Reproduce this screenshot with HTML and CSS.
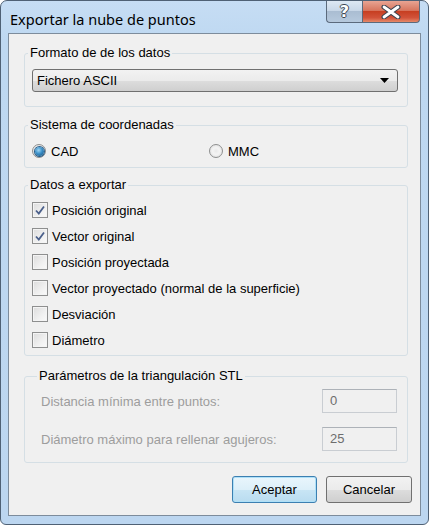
FILE: index.html
```html
<!DOCTYPE html>
<html lang="es">
<head>
<meta charset="utf-8">
<title>Exportar la nube de puntos</title>
<link rel="stylesheet" href="styles.css">
</head>
<body>
<div class="window">
  <div class="titlebar">
    <span class="title">Exportar la nube de puntos</span>
    <div class="caption-buttons">
      <div class="cap-btn help"><span class="help-glyph">?</span></div>
      <div class="cap-btn close">
        <svg width="22" height="14" viewBox="0 0 22 14">
          <path d="M4 2 L18 12 M18 2 L4 12" stroke="#3a4350" stroke-width="5" stroke-linecap="round"/>
          <path d="M4 2 L18 12 M18 2 L4 12" stroke="#ffffff" stroke-width="2.8" stroke-linecap="round"/>
        </svg>
      </div>
    </div>
  </div>
  <div class="client">
    <fieldset class="group g-format">
      <legend>Formato de de los datos</legend>
      <div class="combo">
        <span>Fichero ASCII</span>
        <svg class="combo-arrow" width="9" height="5" viewBox="0 0 9 5"><path d="M0 0 H9 L4.5 5 Z" fill="#000"/></svg>
      </div>
    </fieldset>

    <fieldset class="group g-coords">
      <legend>Sistema de coordenadas</legend>
      <div class="radio-row">
        <div class="option radio-opt"><span class="radio checked"></span>CAD</div>
        <div class="option radio-opt mmc"><span class="radio"></span>MMC</div>
      </div>
    </fieldset>

    <fieldset class="group g-data">
      <legend>Datos a exportar</legend>
      <div class="check-list">
        <div class="option"><span class="check checked"><svg width="12" height="12" viewBox="0 0 12 12"><path d="M2 6.5 L4.8 9.5 L10 2.5" fill="none" stroke="#4a5f8a" stroke-width="1.8"/></svg></span>Posición original</div>
        <div class="option"><span class="check checked"><svg width="12" height="12" viewBox="0 0 12 12"><path d="M2 6.5 L4.8 9.5 L10 2.5" fill="none" stroke="#4a5f8a" stroke-width="1.8"/></svg></span>Vector original</div>
        <div class="option"><span class="check"></span>Posición proyectada</div>
        <div class="option"><span class="check"></span>Vector proyectado (normal de la superficie)</div>
        <div class="option"><span class="check"></span>Desviación</div>
        <div class="option"><span class="check"></span>Diámetro</div>
      </div>
    </fieldset>

    <fieldset class="group g-stl">
      <legend>Parámetros de la triangulación STL</legend>
      <div class="field-row">
        <span class="disabled-label">Distancia mínima entre puntos:</span>
        <div class="field">0</div>
      </div>
      <div class="field-row">
        <span class="disabled-label">Diámetro máximo para rellenar agujeros:</span>
        <div class="field">25</div>
      </div>
    </fieldset>

    <div class="buttons">
      <div class="btn default">Aceptar</div>
      <div class="btn">Cancelar</div>
    </div>
  </div>
</div>
</body>
</html>
```

FILE: styles.css
```css
* { box-sizing: border-box; }

html, body {
  margin: 0;
  padding: 0;
  width: 429px;
  height: 525px;
  background: #ffffff;
  overflow: hidden;
}

.window {
  width: 429px;
  height: 525px;
  border: 1px solid #4f6175;
  border-radius: 7px 7px 6px 6px;
  background: linear-gradient(180deg, #c6ddf4 0px, #bed8f1 40px, #bcd6f0 100%);
  padding: 0 7px 8px 7px;
  display: flex;
  flex-direction: column;
  font-family: "Liberation Sans", Arial, sans-serif;
  font-size: 13px;
  color: #000;
}

.titlebar {
  height: 32px;
  display: flex;
  align-items: flex-start;
  justify-content: space-between;
}

.title {
  font-family: "Noto Sans", "Open Sans", sans-serif;
  font-size: 14.5px;
  line-height: 20px;
  padding: 8px 0 0 2px;
  color: #000;
}

.caption-buttons {
  display: flex;
  margin-right: 1px;
}

.cap-btn {
  height: 22px;
  display: flex;
  align-items: center;
  justify-content: center;
  border: 1px solid #5b6a7c;
  border-top: none;
}

.help {
  width: 36px;
  border-radius: 0 0 0 4px;
  border-right: none;
  background: linear-gradient(180deg, #dde8f3 0%, #c9d8e8 45%, #aabdd2 50%, #b6c9dd 100%);
}

.help-glyph {
  font-family: "DejaVu Sans", sans-serif;
  font-weight: bold;
  font-size: 16px;
  line-height: 16px;
  color: #fff;
  text-shadow: -1px 0 #3d4753, 1px 0 #3d4753, 0 -1px #3d4753, 0 1px #3d4753;
}

.close {
  width: 58px;
  border-radius: 0 0 4px 0;
  background: linear-gradient(180deg, #e8a493 0%, #d7765f 45%, #c73f22 50%, #d2533a 80%, #e58a6a 100%);
}

.client {
  flex: 1;
  border: 1px solid #7d8c9c;
  background: #f0f0f0;
  padding: 0 0 0 15px;
  display: flex;
  flex-direction: column;
  margin-top: 0;
}

.group {
  margin: 0;
  width: 384px;
  border: 1px solid #d5dfe5;
  border-radius: 3px;
  min-width: 0;
}

.group legend {
  padding: 0 2px;
  margin-left: -4px;
  line-height: 16px;
  height: 16px;
}

.g-format {
  margin-top: 11px;
  padding: 8px 9px 14px 7px;
}

.combo {
  height: 23px;
  border: 1px solid #707070;
  border-radius: 3px;
  background: linear-gradient(180deg, #f2f2f2 0%, #ebebeb 50%, #dddddd 51%, #cfcfcf 100%);
  display: flex;
  align-items: center;
  justify-content: space-between;
  padding: 0 8px 0 4px;
}

.combo-arrow { display: block; }

.g-coords {
  margin-top: 10px;
  padding: 10px 9px 8px 7px;
}

.radio-row {
  display: flex;
  height: 16px;
}

.option {
  display: flex;
  align-items: center;
  gap: 5px;
  height: 16px;
  white-space: nowrap;
}

.radio-opt { width: 177px; }

.radio {
  width: 14px;
  height: 14px;
  border-radius: 50%;
  border: 1px solid #8e8f8f;
  background: radial-gradient(circle at 50% 50%, #e9e9e9 0, #f4f4f4 40%, #d9d9d9 100%);
  display: flex;
  align-items: center;
  justify-content: center;
}

.radio.checked::after {
  content: "";
  width: 9px;
  height: 9px;
  border-radius: 50%;
  background: radial-gradient(circle at 40% 35%, #9fd7f5 0, #3a8fc8 45%, #144f7c 100%);
  box-shadow: 0 0 0 1px #2b5f8a;
}

.g-data {
  margin-top: 9px;
  padding: 9px 9px 7px 7px;
}

.check-list {
  display: flex;
  flex-direction: column;
  gap: 10px;
}

.check-list .option { gap: 4px; }

.check {
  width: 16px;
  height: 16px;
  border: 1px solid #8e8f8f;
  background: linear-gradient(135deg, #dcdcdc 0%, #f0f0f0 60%, #fafafa 100%);
  box-shadow: inset 0 0 0 1px #f4f4f4;
  display: flex;
  align-items: center;
  justify-content: center;
}

.check svg { display: block; }

.g-stl {
  margin-top: 12px;
  padding: 5px 10px 11px 16px;
}

.field-row {
  display: flex;
  align-items: center;
  justify-content: space-between;
  height: 24px;
}

.field-row + .field-row { margin-top: 14px; }

.disabled-label {
  color: #9d9d9d;
}

.field {
  width: 75px;
  height: 24px;
  border: 1px solid #c9cdd2;
  border-top-color: #adb2b8;
  background: #f0f0f0;
  color: #6d6d6d;
  padding: 0 0 0 7px;
  line-height: 22px;
}

.buttons {
  display: flex;
  justify-content: flex-end;
  gap: 9px;
  margin-top: 13px;
  padding-right: 8px;
}

.btn {
  width: 86px;
  height: 27px;
  border: 1px solid #707070;
  border-radius: 3px;
  background: linear-gradient(180deg, #f2f2f2 0%, #ebebeb 50%, #dddddd 51%, #cfcfcf 100%);
  display: flex;
  align-items: center;
  justify-content: center;
}

.btn.default {
  width: 85px;
  border-color: #3c7fb1;
  background: linear-gradient(180deg, #e9f5fc 0%, #dceff9 50%, #c8e5f5 51%, #b9dcf0 100%);
  box-shadow: inset 0 0 0 1px #aee0f8;
}
```
